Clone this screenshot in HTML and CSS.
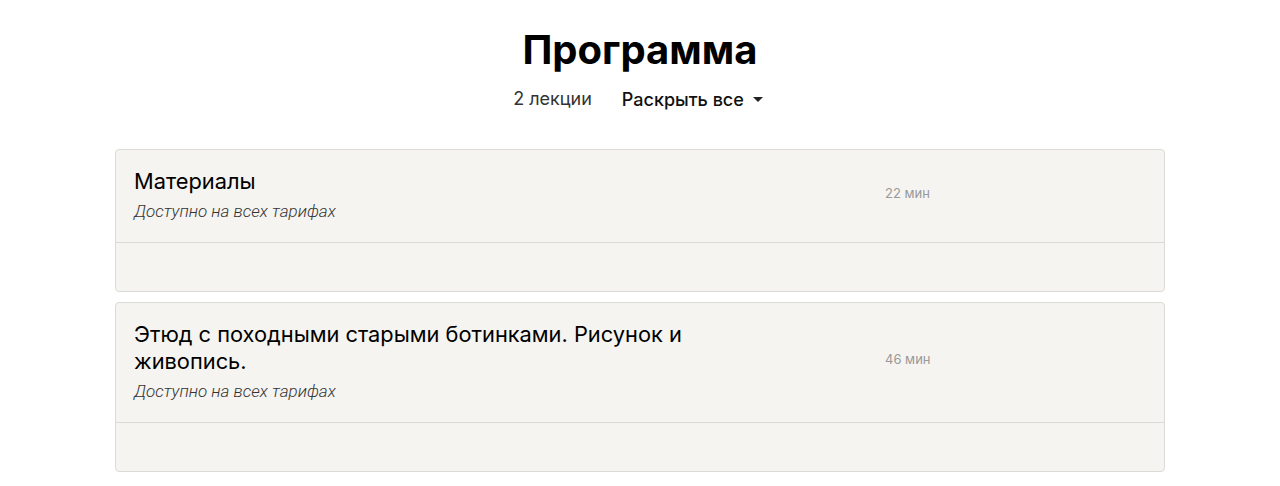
FILE: index.html
```html
<!DOCTYPE html>
<html lang="ru">
<head>
    <meta charset="UTF-8">
    <title>Программа</title>
    <link rel="stylesheet" href="styles.css">
</head>
<body>
    <header class="program-head">
        <h1>Программа</h1>
        <div class="program-meta">
            <span class="count">2 лекции</span>
            <button class="expand">Раскрыть все <span class="caret"></span></button>
        </div>
    </header>

    <main class="lessons">
        <div class="lesson">
            <div class="lesson-head">
                <div class="lesson-info">
                    <div class="lesson-title">Материалы</div>
                    <div class="lesson-access">Доступно на всех тарифах</div>
                </div>
                <div class="lesson-time">22 мин</div>
            </div>
            <div class="lesson-body"></div>
        </div>

        <div class="lesson">
            <div class="lesson-head">
                <div class="lesson-info">
                    <div class="lesson-title">Этюд с походными старыми ботинками. Рисунок и живопись.</div>
                    <div class="lesson-access">Доступно на всех тарифах</div>
                </div>
                <div class="lesson-time">46 мин</div>
            </div>
            <div class="lesson-body"></div>
        </div>
    </main>
</body>
</html>
```

FILE: styles.css
```css
body {
    margin: 0;
    font-family: Inter, 'Noto Sans', sans-serif;
    background: #ffffff;
    color: #111;
}

.program-head {
    text-align: center;
    padding-top: 26px;
}
.program-head h1 {
    margin: 0;
    font-size: 40px;
    line-height: 48px;
    font-weight: 700;
    color: #000;
}
.program-meta {
    display: flex;
    justify-content: center;
    align-items: center;
    gap: 30px;
    margin-top: 13px;
    margin-left: -4px;
    font-size: 18px;
    line-height: 24px;
}
.count {
    color: #333;
}
.expand {
    display: flex;
    align-items: center;
    gap: 9px;
    padding: 0;
    border: none;
    background: none;
    font-family: inherit;
    font-size: 18px;
    font-weight: 500;
    color: #111;
    cursor: pointer;
}
.caret {
    width: 0;
    height: 0;
    border-left: 5px solid transparent;
    border-right: 5px solid transparent;
    border-top: 5px solid #222;
}

.lessons {
    width: 1050px;
    margin: 38px auto 0;
    display: flex;
    flex-direction: column;
    gap: 10px;
}
.lesson {
    background: #f5f4f1;
    border: 1px solid #dcdad6;
    border-radius: 4px;
}
.lesson-head {
    display: flex;
    align-items: center;
    padding: 18px 18px 21px;
    border-bottom: 1px solid #dcdad6;
}
.lesson-info {
    width: 600px;
}
.lesson-title {
    font-size: 21.8px;
    line-height: 27px;
    color: #000;
}
.lesson-access {
    margin-top: 6px;
    font-family: Roboto, sans-serif;
    font-style: italic;
    font-weight: 300;
    font-size: 17px;
    line-height: 20px;
    color: #333;
}
.lesson-time {
    margin-left: 151px;
    margin-bottom: 4px;
    font-size: 13px;
    color: #999;
}
.lesson-body {
    height: 48px;
}
```
